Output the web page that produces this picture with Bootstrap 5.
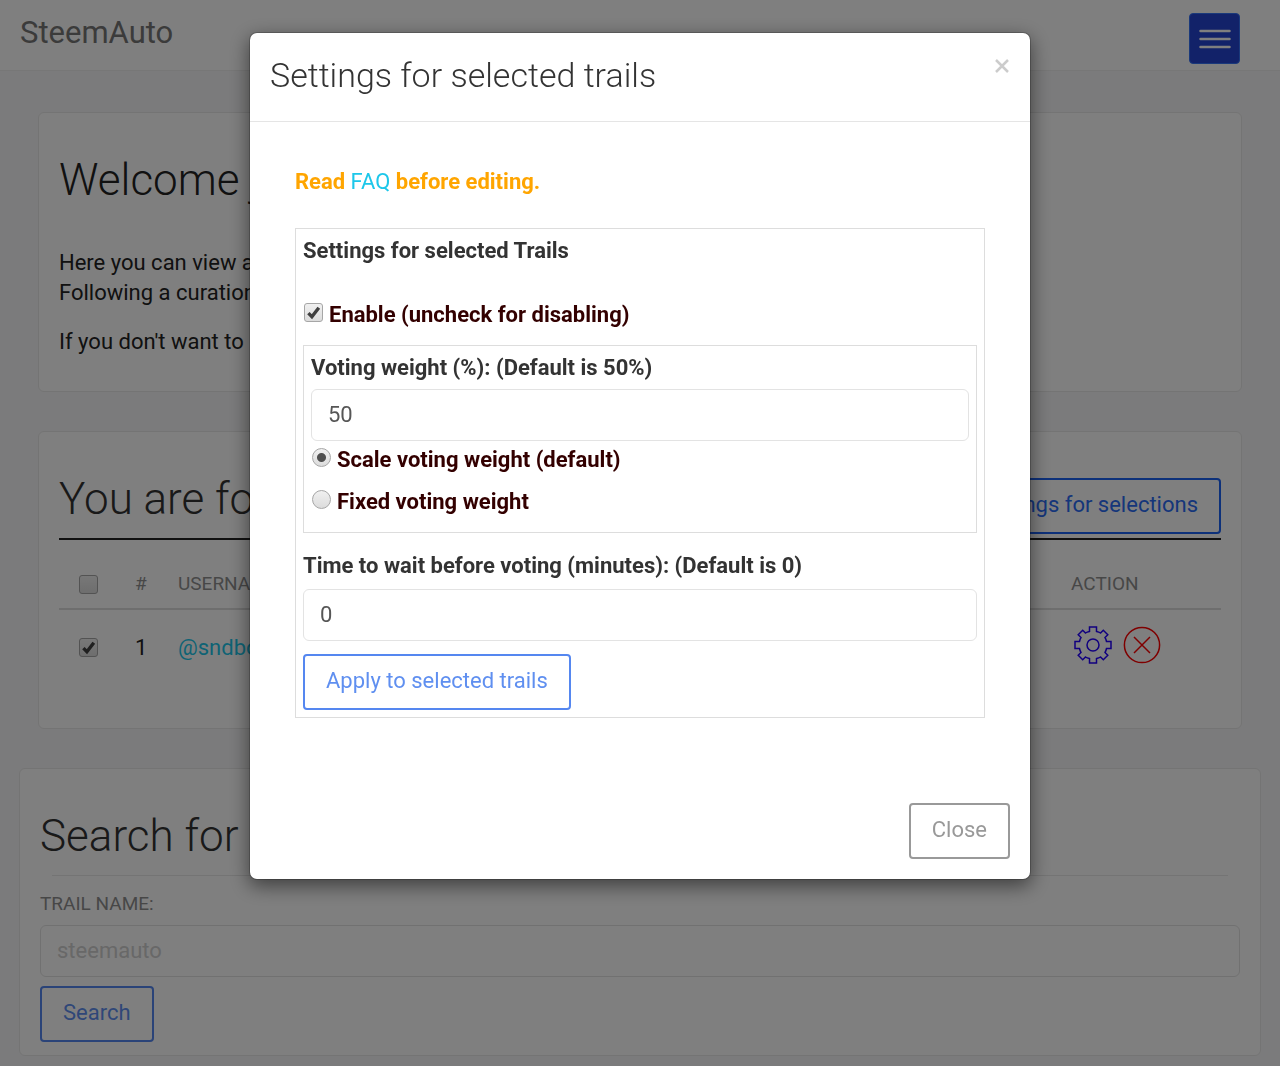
<!DOCTYPE html>
<html lang="en">
<head>
<meta charset="utf-8">
<meta name="viewport" content="width=device-width, initial-scale=1">
<title>SteemAuto</title>
<link href="https://cdn.jsdelivr.net/npm/bootstrap@5.3.0/dist/css/bootstrap.min.css" rel="stylesheet">
<style>
body{font-family:Roboto,"Liberation Sans",sans-serif;font-size:22px;line-height:30px;color:#333;background:#f7f7f8}
a{color:#1dc7ea;text-decoration:none}
h2{font-size:44px;line-height:50px;font-weight:300;margin:0}
.topbar{height:71px;background:#fff;border-bottom:1px solid #eee;padding:13px 40px 0 20px}
.topbar .brand{font-size:31px;line-height:39px;color:#777}
.menu-btn{width:51px;height:51px;padding:0;border:1px solid #3472f7;border-radius:4px;background:#2444d2;line-height:0}
main{padding:41px 19px 0}
.panel{background:#fff;border:1px solid #e8e8e8;border-radius:6px;padding:20px;margin-bottom:39px}
.inset{margin-left:19px;margin-right:19px}
.panel h2{padding-top:22px}
.intro{padding-bottom:34px;color:#222}
.intro p{margin:0}
.intro h2+p{margin:43px 0 19px}
.btn{display:block;font-size:22px;line-height:30px;border-width:2px;border-radius:4px;padding:10px 21px 12px}
.btn-line{--bs-btn-color:#2b6cf5;--bs-btn-border-color:#1b62f5;margin-top:26px}
.btn-soft{--bs-btn-color:#5f8ff0;--bs-btn-border-color:#5587f0}
.btn-grey{--bs-btn-color:#999;--bs-btn-border-color:#999}
.form-control{font-size:22px;line-height:30px;height:52px;padding:8px 16px 10px;border-color:#e3e3e3;color:#565656}
.form-control::placeholder{color:#d0d0d0}
.tick{appearance:none;display:block;flex:none;width:19px;height:19px;margin:0;border:1px solid #a6a6a6;border-radius:3px;background:linear-gradient(#f0f0f0,#dcdcdc)}
.tick[type=radio]{border-radius:50%}
.tick[type=radio]:checked{background:radial-gradient(circle,#505050 0 4px,transparent 5px),linear-gradient(#f0f0f0,#dcdcdc)}
.tick[type=checkbox]:checked{background:url("data:image/svg+xml,%3Csvg xmlns='http://www.w3.org/2000/svg' viewBox='0 0 16 16'%3E%3Cpath d='M3.200 8.600l3.300 3.400L13 3.600' fill='none' stroke='%23404040' stroke-width='3.200'/%3E%3C/svg%3E") center/17px no-repeat,linear-gradient(#f0f0f0,#dcdcdc)}
.trails{--bs-table-bg:transparent;margin:0;table-layout:fixed}
.trails th{font-size:19px;font-weight:400;color:#8f8f8f;padding:29px 10px 9px;border-bottom:2px solid #ddd;vertical-align:middle}
.trails td{padding:23px 10px 0;border:0;color:#222;height:99px}
.trails .c-check{width:66px;padding-left:20px}
.trails .c-no{width:43px}
.trails .c-action{width:160px}
.trails td.c-action{padding:16px 0 0 12px}
.trails td .tick{margin-top:5px}
.rule-dark{border-bottom:2px solid #222;padding-bottom:4px}
.search-panel{padding-bottom:13px}
.hr-soft{margin:14px 12px 13px;border-top:1px solid #e8e8e8;opacity:1}
.lbl{font-size:19px;color:#8f8f8f;margin-bottom:6px}
.search-btn{margin-top:9px}
.modal-dialog{max-width:782px;margin:32px auto}
.modal-content{border:1px solid rgba(0,0,0,.2);border-radius:8px;box-shadow:0 6px 19px rgba(0,0,0,.5);color:#333}
.modal-header{padding:19px 20px 23px;border-color:#e5e5e5}
.modal-title{font-size:34px;line-height:46px;font-weight:300}
.modal-body{padding:45px 45px 0}
.x-btn{border:0;background:none;padding:6px 0;line-height:0;color:#ccc}
.notice{color:orange;font-weight:700;margin:0 0 31px}
.notice a{font-weight:400}
.box{border:1px solid #ddd;padding:7px}
.box label,.box h3{display:block;font-size:22px;line-height:30px;font-weight:700;margin:0}
.box .opt{color:#300;margin-left:6px}
.box .tick{margin:3px 0 0 1px}
.enable{margin:34px 0 15px}
.weight{padding-bottom:15px;margin-bottom:18px}
.weight .form-control{margin:6px 0 4px}
.weight .opt-row+.opt-row{margin-top:12px}
.wait{margin:8px 0 13px}
.modal-footer{border:0;padding:85px 20px 20px}
.modal-footer .btn{margin:0}
</style>
</head>
<body>
<nav class="topbar d-flex justify-content-between align-items-start">
  <a class="brand" href="#">SteemAuto</a>
  <button class="menu-btn" type="button" aria-label="Menu"><svg width="32" height="20" viewBox="0 0 32 20"><path d="M1.500 2h29M1.500 10h29M1.500 18h29" stroke="#fff" stroke-width="2.500" stroke-linecap="round"/></svg></button>
</nav>
<main>
  <section class="panel inset intro">
    <h2>Welcome j</h2>
    <p>Here you can view all<br>Following a curation</p>
    <p>If you don't want to</p>
  </section>
  <section class="panel inset">
    <div class="rule-dark d-flex justify-content-between align-items-start">
      <h2>You are following</h2>
      <button class="btn btn-outline-primary btn-line" type="button">Settings for selections</button>
    </div>
    <table class="table trails">
      <thead><tr><th class="c-check"><input class="tick" type="checkbox" aria-label="Select all"></th><th class="c-no">#</th><th>USERNAME</th><th class="c-action">ACTION</th></tr></thead>
      <tbody><tr>
        <td class="c-check"><input class="tick" type="checkbox" checked aria-label="Select trail 1"></td>
        <td class="c-no">1</td>
        <td><a href="#">@sndbox</a></td>
        <td class="c-action"><div class="d-flex gap-2">
          <a href="#" aria-label="Settings"><svg class="d-block" width="42" height="38" viewBox="-20 -19 42 38" fill="none" stroke="#20f" stroke-width="1.500"><circle r="6"/><path d="M-3.500 -18H3.500V-13.500Q6 -13 7.500 -12L10.300 -14.800L14.800 -10.300L12 -7.500Q13 -6 13.500 -3.500H18V3.500H13.500Q13 6 12 7.500L14.800 10.300L10.300 14.800L7.500 12Q6 13 3.500 13.500V18H-3.500V13.500Q-6 13 -7.500 12L-10.300 14.800L-14.800 10.300L-12 7.500Q-13 6 -13.500 3.500H-18V-3.500H-13.500Q-13 -6 -12 -7.500L-14.800 -10.300L-10.300 -14.800L-7.500 -12Q-6 -13 -3.500 -13.500Z"/></svg></a>
          <a href="#" aria-label="Unfollow"><svg class="d-block" width="38" height="38" viewBox="-19 -19 38 38" fill="none" stroke="red" stroke-width="1.500"><circle r="17.600"/><path d="M-8 -8L8 8M8 -8L-8 8"/></svg></a>
        </div></td>
      </tr></tbody>
    </table>
  </section>
  <section class="panel search-panel mb-0">
    <h2>Search for a trail</h2>
    <hr class="hr-soft">
    <label class="lbl d-block" for="trail">TRAIL NAME:</label>
    <input class="form-control" id="trail" type="text" placeholder="steemauto">
    <button class="btn btn-outline-primary btn-soft search-btn" type="button">Search</button>
  </section>
</main>
<div class="modal-backdrop show"></div>
<div class="modal d-block" tabindex="-1" role="dialog" aria-labelledby="dlgTitle">
  <div class="modal-dialog">
    <div class="modal-content">
      <div class="modal-header d-flex justify-content-between align-items-start">
        <h1 class="modal-title" id="dlgTitle">Settings for selected trails</h1>
        <button class="x-btn" type="button" aria-label="Close"><svg width="16" height="16" viewBox="0 0 16 16"><path d="M2 2l12 12M14 2L2 14" stroke="currentColor" stroke-width="2.500"/></svg></button>
      </div>
      <div class="modal-body">
        <p class="notice">Read <a href="#">FAQ</a> before editing.</p>
        <form class="box">
          <h3>Settings for selected Trails</h3>
          <div class="d-flex align-items-start enable"><input class="tick" type="checkbox" id="en" checked><label class="opt" for="en">Enable (uncheck for disabling)</label></div>
          <div class="box weight">
            <label for="vw">Voting weight (%): (Default is 50%)</label>
            <input class="form-control" id="vw" type="text" value="50">
            <div class="d-flex align-items-start opt-row"><input class="tick" type="radio" name="w" id="sc" checked><label class="opt" for="sc">Scale voting weight (default)</label></div>
            <div class="d-flex align-items-start opt-row"><input class="tick" type="radio" name="w" id="fx"><label class="opt" for="fx">Fixed voting weight</label></div>
          </div>
          <label for="tm">Time to wait before voting (minutes): (Default is 0)</label>
          <input class="form-control wait" id="tm" type="text" value="0">
          <button class="btn btn-outline-primary btn-soft" type="button">Apply to selected trails</button>
        </form>
      </div>
      <div class="modal-footer"><button class="btn btn-outline-secondary btn-grey" type="button">Close</button></div>
    </div>
  </div>
</div>
<script src="https://cdn.jsdelivr.net/npm/bootstrap@5.3.0/dist/js/bootstrap.bundle.min.js"></script>
</body>
</html>
